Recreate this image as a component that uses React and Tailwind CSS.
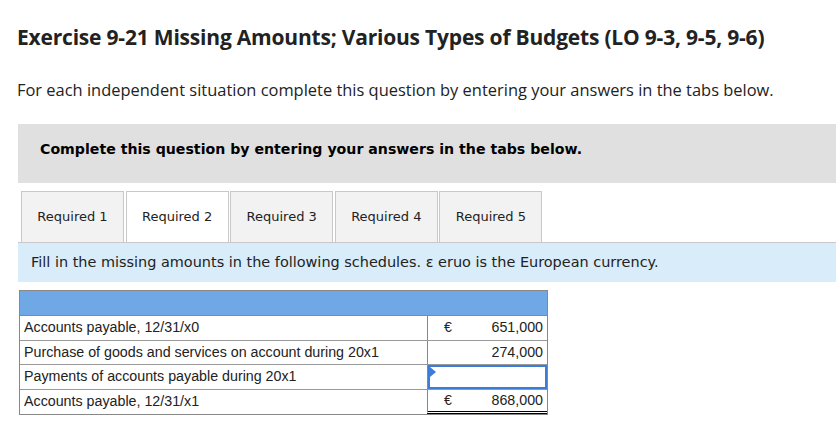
import React from 'react';

const tabs = ['Required 1', 'Required 2', 'Required 3', 'Required 4', 'Required 5'];

const rows = [
  { label: 'Accounts payable, 12/31/x0', euro: true, value: '651,000' },
  { label: 'Purchase of goods and services on account during 20x1', value: '274,000' },
  { label: 'Payments of accounts payable during 20x1', input: true },
  { label: 'Accounts payable, 12/31/x1', euro: true, value: '868,000', total: true },
];

export default function App() {
  return (
    <div className="w-[836px] h-[424px] overflow-hidden bg-white text-[#222]">
      {/* Header */}
      <h1 className="pl-[17px] pt-[23px] text-[21px] font-bold leading-[28px] tracking-[-0.2px] font-['Open_Sans',sans-serif]">
        Exercise 9-21 Missing Amounts; Various Types of Budgets (LO 9-3, 9-5, 9-6)
      </h1>
      <p className="pl-[17px] mt-[28px] text-[16.45px] leading-[22px] font-['Open_Sans',sans-serif]">
        For each independent situation complete this question by entering your answers in the tabs below.
      </p>

      {/* Instruction box */}
      <div className="ml-[18px] mt-[23px] h-[59px] bg-[#e0e0e0] pl-[22px] pt-[15px]">
        <p className="text-[14.15px] font-bold text-black font-['DejaVu_Sans',sans-serif]">
          Complete this question by entering your answers in the tabs below.
        </p>
      </div>

      {/* Tabs */}
      <div className="ml-[21px] mt-[8px] flex gap-[1.6px]">
        {tabs.map((t, i) => (
          <div
            key={t}
            className={
              'w-[103px] h-[51px] flex items-center justify-center border border-[#c8c8c8] border-b-0 text-[13px] text-[#222] font-[\'DejaVu_Sans\',sans-serif] ' +
              (i === 1 ? 'bg-white border-[#aaa]' : 'bg-[#f2f2f2]')
            }
          >
            {t}
          </div>
        ))}
      </div>

      {/* Info bar */}
      <div className="ml-[18px] h-[40px] bg-[#d9ecf9] border-t border-[#c8c8c8] flex items-center pl-[13px]">
        <p className="text-[14.45px] text-[#222] font-['DejaVu_Sans',sans-serif]">
          Fill in the missing amounts in the following schedules. ε eruo is the European currency.
        </p>
      </div>

      {/* Schedule table */}
      <div className="ml-[19px] mt-[8px] w-[529px] border border-[#888] font-['Liberation_Sans',sans-serif] text-[14.25px] text-[#222]">
        <div className="h-[25px] bg-[#6fa8e4] border-b border-[#888]" />
        {rows.map((r, i) => (
          <div key={i} className={'flex h-[24.5px] ' + (i < rows.length - 1 ? 'border-b border-[#999]' : '')}>
            <div className="flex-1 flex items-center pl-[4px]">{r.label}</div>
            <div
              className={
                'w-[120px] border-l border-[#888] flex items-center ' +
                (r.total ? 'border-b-[3px] border-b-black border-double' : '')
              }
            >
              {r.input ? (
                <div className="relative w-full h-full border-2 border-[#3b7dd8] bg-white">
                  <div className="absolute left-0 top-0 w-0 h-0 border-t-[5px] border-b-[5px] border-l-[6px] border-t-transparent border-b-transparent border-l-[#3b7dd8]" />
                </div>
              ) : (
                <div className="w-full flex justify-between pl-[16px] pr-[4px]">
                  <span>{r.euro ? '€' : ''}</span>
                  <span>{r.value}</span>
                </div>
              )}
            </div>
          </div>
        ))}
      </div>
    </div>
  );
}
